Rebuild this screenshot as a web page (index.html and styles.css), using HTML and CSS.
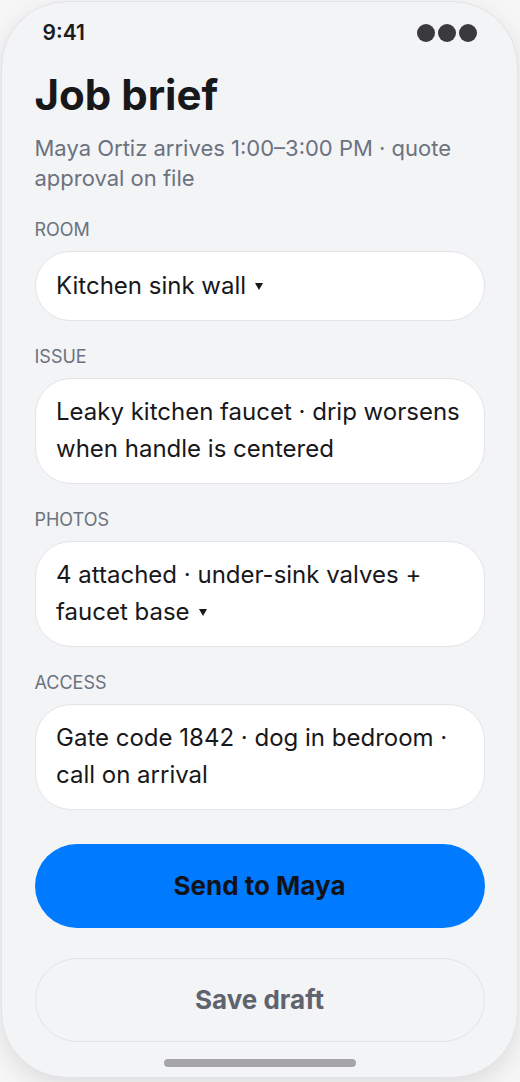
FILE: index.html
```html
<!DOCTYPE html>
<html lang="en">
<head>
<meta charset="utf-8">
<title>Job brief</title>
<link rel="stylesheet" href="styles.css">
</head>
<body>
<div class="phone">
  <div class="status">
    <span class="time">9:41</span>
    <span class="dots"><i></i><i></i><i></i></span>
  </div>
  <h1 class="title">Job brief</h1>
  <p class="subtitle">Maya Ortiz arrives 1:00–3:00 PM · quote approval on file</p>
  <div class="fields">
    <div class="field">
      <div class="label">ROOM</div>
      <div class="box">Kitchen sink wall<span class="caret"></span></div>
    </div>
    <div class="field">
      <div class="label">ISSUE</div>
      <div class="box">Leaky kitchen faucet · drip worsens when handle is centered</div>
    </div>
    <div class="field">
      <div class="label">PHOTOS</div>
      <div class="box">4 attached · under-sink valves + faucet base<span class="caret"></span></div>
    </div>
    <div class="field">
      <div class="label">ACCESS</div>
      <div class="box">Gate code 1842 · dog in bedroom · call on arrival</div>
    </div>
  </div>
  <button class="btn primary">Send to Maya</button>
  <button class="btn secondary">Save draft</button>
  <div class="home"></div>
</div>
</body>
</html>
```
FILE: styles.css
```css
html, body {
  margin: 0;
  padding: 0;
}
body {
  background: #f6f6f7;
  font-family: Inter, "Noto Sans", sans-serif;
  width: 520px;
  height: 1082px;
  overflow: hidden;
}
.phone {
  box-sizing: border-box;
  width: 517px;
  height: 1077px;
  margin: 1px 0 0 1px;
  background: #f3f4f6;
  border: 1.5px solid #e2e3e7;
  border-radius: 66px;
  box-shadow: 0 8px 24px rgba(0, 0, 0, 0.10);
  padding: 19px 32.5px 0 32.5px;
  display: flex;
  flex-direction: column;
}
.status {
  display: flex;
  justify-content: space-between;
  align-items: center;
  height: 24px;
  padding: 0 8px 0 8px;
}
.time {
  font-size: 21px;
  font-weight: 600;
  color: #1c1c1e;
  line-height: 24px;
}
.dots {
  display: flex;
  gap: 3px;
}
.dots i {
  display: block;
  width: 18px;
  height: 18px;
  border-radius: 50%;
  background: #3a3a3c;
}
.title {
  margin: 26px 0 0 0;
  font-size: 42px;
  line-height: 48px;
  font-weight: 700;
  color: #18181b;
}
.subtitle {
  margin: 14px 0 0 0;
  font-size: 22px;
  line-height: 30px;
  color: #6b7280;
}
.fields {
  margin-top: 26px;
  display: flex;
  flex-direction: column;
  gap: 25px;
}
.field {
  display: flex;
  flex-direction: column;
  gap: 10px;
}
.label {
  font-size: 18px;
  line-height: 22px;
  color: #6b7280;
}
.box {
  background: #ffffff;
  border: 1.5px solid #e3e4e8;
  border-radius: 36px;
  padding: 15.5px 20.5px;
  font-size: 24px;
  line-height: 36.5px;
  color: #18181b;
}
.caret {
  display: inline-block;
  width: 0;
  height: 0;
  margin-left: 9px;
  border-left: 4px solid transparent;
  border-right: 4px solid transparent;
  border-top: 7px solid #18181b;
  vertical-align: 4px;
}
.btn {
  display: block;
  width: 100%;
  height: 84px;
  border-radius: 42px;
  font-family: inherit;
  font-size: 26px;
  font-weight: 700;
  cursor: pointer;
}
.primary {
  margin-top: 34px;
  background: #007aff;
  border: none;
  color: #111318;
}
.secondary {
  margin-top: 30px;
  background: transparent;
  border: 1.5px solid #e2e3e7;
  color: #5f636e;
}
.home {
  align-self: center;
  margin-top: 17px;
  width: 192px;
  height: 8px;
  border-radius: 4px;
  background: #a6a6a9;
}
```
